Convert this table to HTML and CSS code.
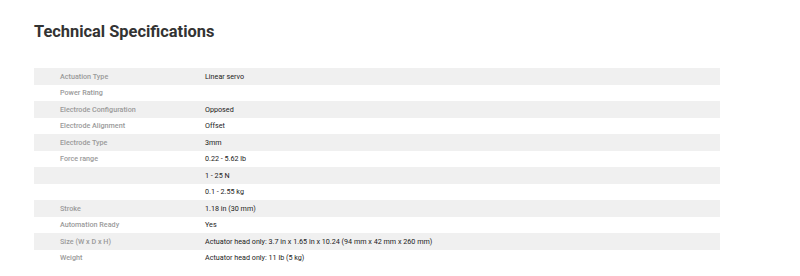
FILE: index.html
```html
<!DOCTYPE html>
<html>
<head>
<meta charset="utf-8">
<link rel="stylesheet" href="styles.css">
</head>
<body>
<div class="page">
  <h1 class="title">Technical Specifications</h1>
  <div class="specs">
    <div class="row"><div class="label">Actuation Type</div><div class="value">Linear servo</div></div>
    <div class="row"><div class="label">Power Rating</div><div class="value"></div></div>
    <div class="row"><div class="label">Electrode Configuration</div><div class="value">Opposed</div></div>
    <div class="row"><div class="label">Electrode Alignment</div><div class="value">Offset</div></div>
    <div class="row"><div class="label">Electrode Type</div><div class="value">3mm</div></div>
    <div class="row"><div class="label">Force range</div><div class="value">0.22 - 5.62 lb</div></div>
    <div class="row"><div class="label"></div><div class="value">1 - 25 N</div></div>
    <div class="row"><div class="label"></div><div class="value">0.1 - 2.55 kg</div></div>
    <div class="row"><div class="label">Stroke</div><div class="value">1.18 in (30 mm)</div></div>
    <div class="row"><div class="label">Automation Ready</div><div class="value">Yes</div></div>
    <div class="row"><div class="label">Size (W x D x H)</div><div class="value">Actuator head only: 3.7 in x 1.65 in x 10.24 (94 mm x 42 mm x 260 mm)</div></div>
    <div class="row"><div class="label">Weight</div><div class="value">Actuator head only: 11 lb (5 kg)</div></div>
  </div>
</div>
</body>
</html>
```
FILE: styles.css
```css
html, body {
  margin: 0;
  padding: 0;
  background: #fff;
}
.page {
  padding: 21px 80px 0 34px;
  font-family: Roboto, "Liberation Sans", sans-serif;
}
.title {
  margin: 0;
  font-size: 16.4px;
  font-weight: 700;
  color: #333;
  line-height: 22px;
}
.specs {
  margin-top: 25px;
  width: 686px;
}
.row {
  display: grid;
  grid-template-columns: 171px 1fr;
  height: 16.5px;
  align-items: center;
  font-size: 7.2px;
}
.row:nth-child(odd) {
  background: #f0f0f0;
}
.label {
  padding-left: 26px;
  color: #9a9a9a;
  font-weight: 500;
}
.value {
  color: #222;
}
```
